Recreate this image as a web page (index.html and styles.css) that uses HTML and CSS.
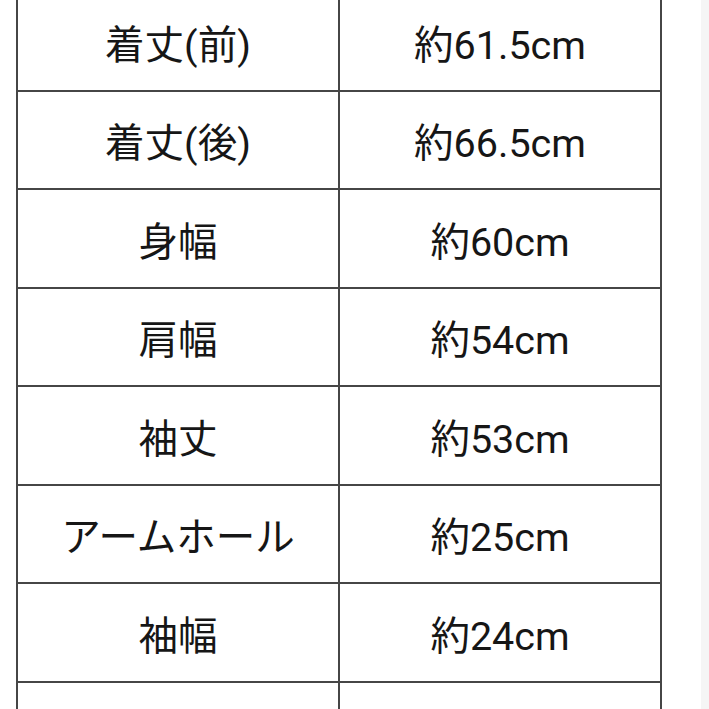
FILE: index.html
```html
<!DOCTYPE html>
<html lang="ja">
<head>
<meta charset="utf-8">
<link rel="stylesheet" href="styles.css">
</head>
<body>
<div class="wrap">
<table class="size">
<tr><td>着丈(前)</td><td>約61.5cm</td></tr>
<tr><td>着丈(後)</td><td>約66.5cm</td></tr>
<tr><td>身幅</td><td>約60cm</td></tr>
<tr><td>肩幅</td><td>約54cm</td></tr>
<tr><td>袖丈</td><td>約53cm</td></tr>
<tr><td>アームホール</td><td>約25cm</td></tr>
<tr><td>袖幅</td><td>約24cm</td></tr>
<tr><td></td><td></td></tr>
</table>
</div>
</body>
</html>
```
FILE: styles.css
```css
html, body {
  margin: 0;
  padding: 0;
  overflow: hidden;
  height: 709px;
}
body {
  background: linear-gradient(to right, #fff 0, #fff 701px, #f5f5f5 701px, #f5f5f5 100%);
}
.wrap {
  padding-left: 16px;
  margin-top: -9px;
}
.size {
  border-collapse: collapse;
  width: 646px;
  table-layout: fixed;
  font-family: Roboto, "Noto Sans CJK JP", sans-serif;
  font-size: 39.5px;
  color: #161616;
  background: #fff;
}
.size td {
  border: 2px solid #464646;
  height: 96.5px;
  padding: 0;
  text-align: center;
  vertical-align: middle;
}
```
